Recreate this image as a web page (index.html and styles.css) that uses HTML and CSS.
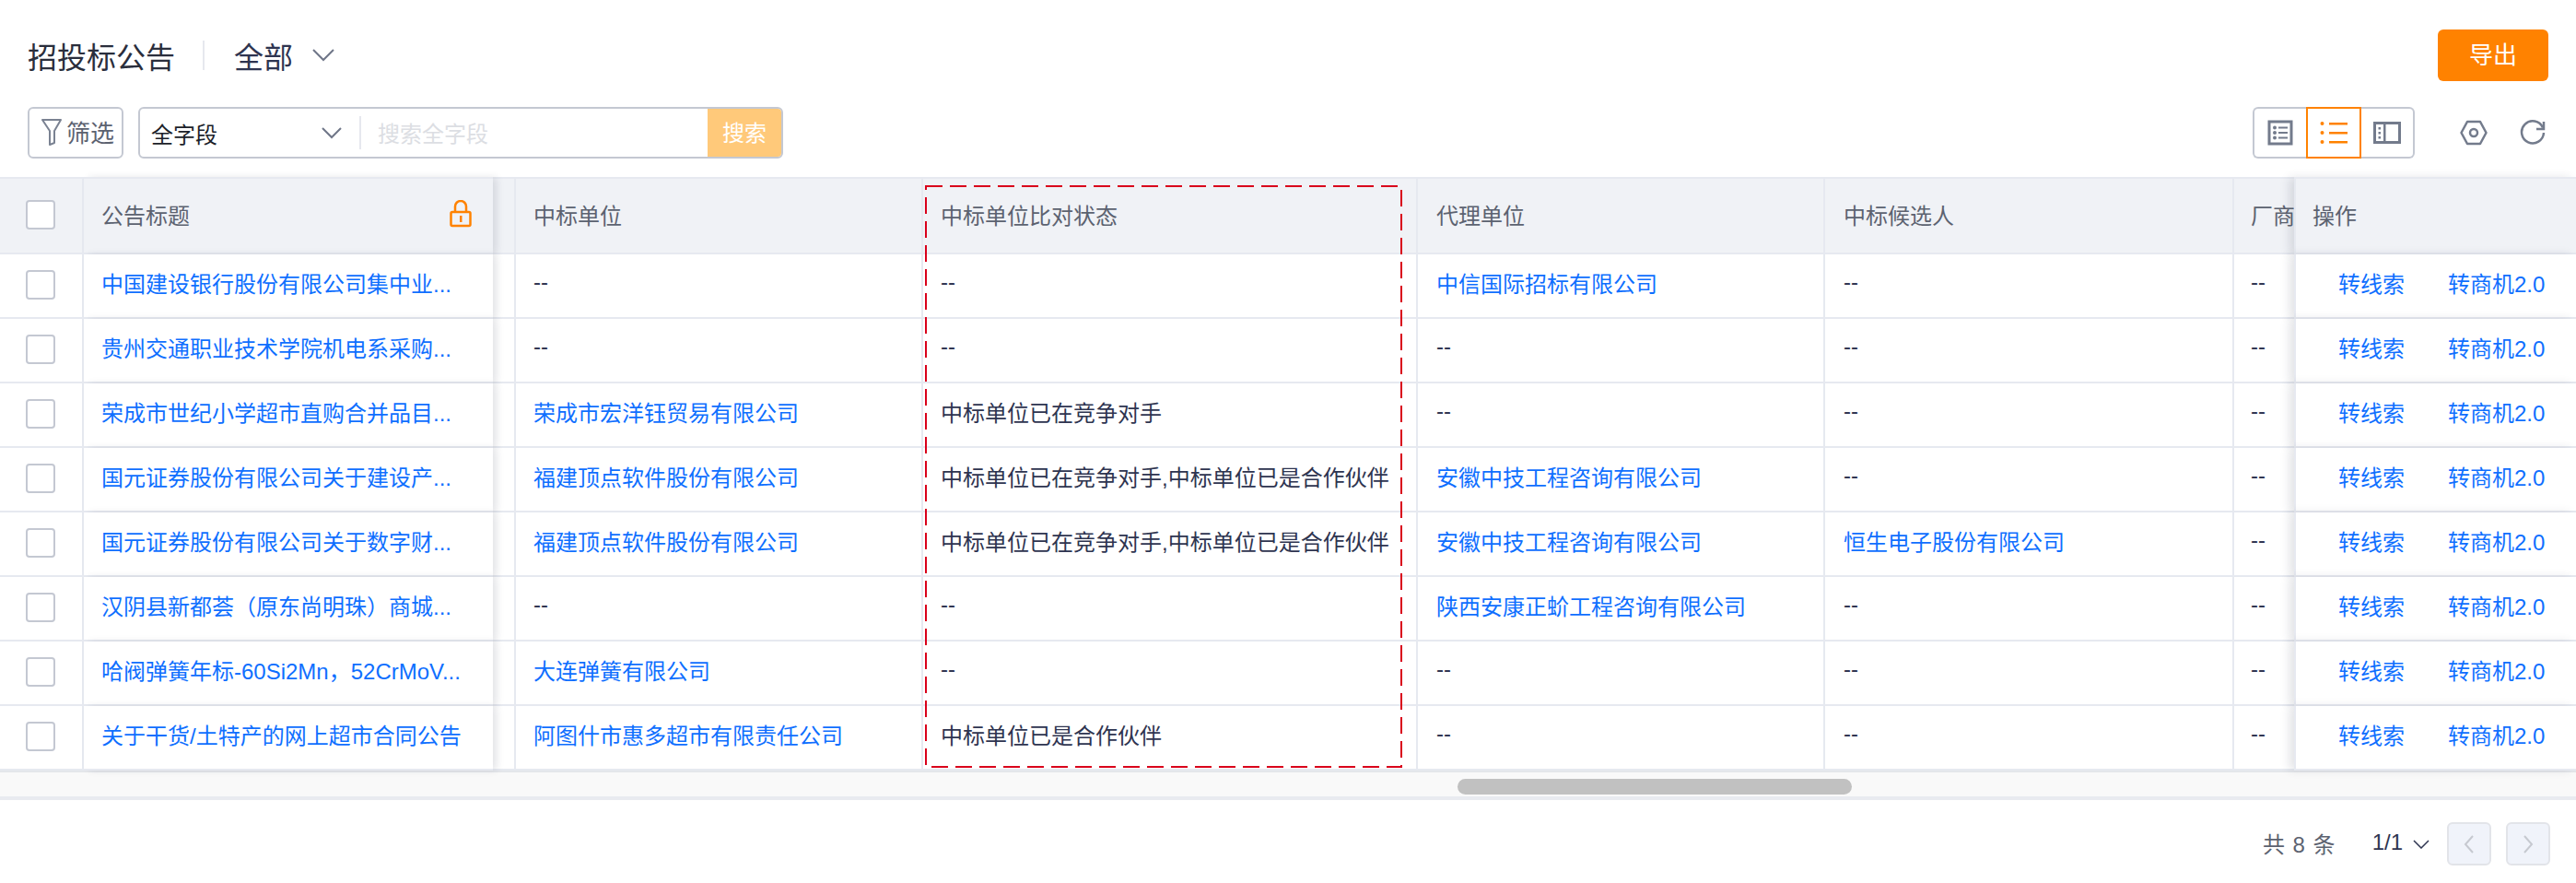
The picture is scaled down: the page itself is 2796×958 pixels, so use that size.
FILE: index.html
```html
<!DOCTYPE html>
<html>
<head>
  <title>招投标公告</title>
  <link rel="stylesheet" href="styles.css">
</head>
<body>
  <div id="page">
    <div class="title-row">
      <h1 class="page-title">招投标公告</h1>
      <span class="title-divider"></span>
      <span class="scope">全部</span>
      <svg class="scope-arrow" width="26" height="16" viewBox="0 0 26 16"><path d="M2 2l11 11L24 2" fill="none" stroke="#6f7688" stroke-width="2"/></svg>
      <button class="export-btn"><span>导出</span></button>
    </div>

    <div class="tool-row">
      <button class="filter-btn">
        <svg width="24" height="30" viewBox="0 0 24 30"><path d="M2 2h20l-7 12v13l-5 2V14z" fill="none" stroke="#7a8292" stroke-width="2" stroke-linejoin="round"/></svg>
        <span>筛选</span>
      </button>
      <div class="search-box">
        <div class="search-field">
          <span>全字段</span>
          <svg width="24" height="14" viewBox="0 0 24 14"><path d="M2 2l10 10L22 2" fill="none" stroke="#6f7688" stroke-width="2"/></svg>
        </div>
        <span class="search-input">搜索全字段</span>
        <button class="search-btn">搜索</button>
      </div>
      <div class="tool-right">
        <div class="view-switch">
          <button class="view-btn">
            <svg width="28" height="28" viewBox="0 0 28 28"><rect x="2" y="2" width="24" height="24" fill="none" stroke="#737b8c" stroke-width="3"/><g fill="#737b8c"><circle cx="8" cy="8.500" r="2"/><circle cx="8" cy="14" r="2"/><circle cx="8" cy="19.500" r="2"/><rect x="12" y="7.500" width="10" height="2"/><rect x="12" y="13" width="10" height="2"/><rect x="12" y="18.500" width="10" height="2"/></g></svg>
          </button>
          <button class="view-btn active">
            <svg width="32" height="26" viewBox="0 0 32 26"><g fill="#ff8200"><circle cx="3.500" cy="3" r="2"/><circle cx="3.500" cy="13" r="2"/><circle cx="3.500" cy="23" r="2"/><rect x="11" y="2" width="20" height="2.500"/><rect x="11" y="12" width="20" height="2.500"/><rect x="11" y="22" width="20" height="2.500"/></g></svg>
          </button>
          <button class="view-btn">
            <svg width="30" height="24" viewBox="0 0 30 24"><rect x="1.500" y="1.500" width="27" height="21" fill="none" stroke="#737b8c" stroke-width="3"/><rect x="11" y="2" width="2.500" height="20" fill="#737b8c"/><g fill="#737b8c"><rect x="5.500" y="6" width="2.500" height="2.500"/><rect x="5.500" y="11" width="2.500" height="2.500"/><rect x="5.500" y="16" width="2.500" height="2.500"/></g></svg>
          </button>
        </div>
        <svg class="tool-icon" width="30" height="28" viewBox="0 0 30 28"><path d="M8 2h14l6.500 12L22 26H8L1.500 14z" fill="none" stroke="#737b8c" stroke-width="2.500" stroke-linejoin="round"/><circle cx="15" cy="14" r="4" fill="none" stroke="#737b8c" stroke-width="2.500"/></svg>
        <svg class="tool-icon" width="28" height="28" viewBox="0 0 28 28"><path d="M25 8.500A12 12 0 1 0 26 14" fill="none" stroke="#737b8c" stroke-width="2.500"/><path d="M26 2v8h-8" fill="none" stroke="#737b8c" stroke-width="2.500"/></svg>
      </div>
    </div>

    <table class="data-table">
      <colgroup>
        <col class="col-check">
        <col class="col-title">
        <col class="col-stub">
        <col class="col-winner">
        <col class="col-status">
        <col class="col-agent">
        <col class="col-candidate">
        <col class="col-vendor">
        <col class="col-action">
      </colgroup>
      <thead>
        <tr>
          <th class="check-cell"><span class="checkbox"></span></th>
          <th class="title-cell">
            <div class="title-head">
              公告标题
              <svg width="24" height="30" viewBox="0 0 24 30"><path d="M6 13V7a6 6 0 0 1 12 0v6" fill="none" stroke="#ff8200" stroke-width="2.500"/><rect x="1.500" y="13" width="21" height="15" rx="1.500" fill="none" stroke="#ff8200" stroke-width="2.500"/><rect x="11" y="17" width="2.500" height="7" fill="#ff8200"/></svg>
            </div>
          </th>
          <th></th>
          <th class="narrow-cell">中标单位</th>
          <th class="narrow-cell">中标单位比对状态</th>
          <th>代理单位</th>
          <th>中标候选人</th>
          <th class="vendor-cell">厂商</th>
          <th class="action-cell">操作</th>
        </tr>
      </thead>
      <tbody>
        <tr>
          <td class="check-cell"><span class="checkbox"></span></td>
          <td class="title-cell"><a>中国建设银行股份有限公司集中业...</a></td>
          <td></td>
          <td class="narrow-cell">--</td>
          <td class="narrow-cell">--</td>
          <td><a>中信国际招标有限公司</a></td>
          <td>--</td>
          <td class="vendor-cell">--</td>
          <td class="action-cell"><div class="actions"><a>转线索</a><a>转商机2.0</a></div></td>
        </tr>
        <tr>
          <td class="check-cell"><span class="checkbox"></span></td>
          <td class="title-cell"><a>贵州交通职业技术学院机电系采购...</a></td>
          <td></td>
          <td class="narrow-cell">--</td>
          <td class="narrow-cell">--</td>
          <td>--</td>
          <td>--</td>
          <td class="vendor-cell">--</td>
          <td class="action-cell"><div class="actions"><a>转线索</a><a>转商机2.0</a></div></td>
        </tr>
        <tr>
          <td class="check-cell"><span class="checkbox"></span></td>
          <td class="title-cell"><a>荣成市世纪小学超市直购合并品目...</a></td>
          <td></td>
          <td class="narrow-cell"><a>荣成市宏洋钰贸易有限公司</a></td>
          <td class="narrow-cell">中标单位已在竞争对手</td>
          <td>--</td>
          <td>--</td>
          <td class="vendor-cell">--</td>
          <td class="action-cell"><div class="actions"><a>转线索</a><a>转商机2.0</a></div></td>
        </tr>
        <tr>
          <td class="check-cell"><span class="checkbox"></span></td>
          <td class="title-cell"><a>国元证券股份有限公司关于建设产...</a></td>
          <td></td>
          <td class="narrow-cell"><a>福建顶点软件股份有限公司</a></td>
          <td class="narrow-cell">中标单位已在竞争对手,中标单位已是合作伙伴</td>
          <td><a>安徽中技工程咨询有限公司</a></td>
          <td>--</td>
          <td class="vendor-cell">--</td>
          <td class="action-cell"><div class="actions"><a>转线索</a><a>转商机2.0</a></div></td>
        </tr>
        <tr>
          <td class="check-cell"><span class="checkbox"></span></td>
          <td class="title-cell"><a>国元证券股份有限公司关于数字财...</a></td>
          <td></td>
          <td class="narrow-cell"><a>福建顶点软件股份有限公司</a></td>
          <td class="narrow-cell">中标单位已在竞争对手,中标单位已是合作伙伴</td>
          <td><a>安徽中技工程咨询有限公司</a></td>
          <td><a>恒生电子股份有限公司</a></td>
          <td class="vendor-cell">--</td>
          <td class="action-cell"><div class="actions"><a>转线索</a><a>转商机2.0</a></div></td>
        </tr>
        <tr>
          <td class="check-cell"><span class="checkbox"></span></td>
          <td class="title-cell"><a>汉阴县新都荟（原东尚明珠）商城...</a></td>
          <td></td>
          <td class="narrow-cell">--</td>
          <td class="narrow-cell">--</td>
          <td><a>陕西安康正蚧工程咨询有限公司</a></td>
          <td>--</td>
          <td class="vendor-cell">--</td>
          <td class="action-cell"><div class="actions"><a>转线索</a><a>转商机2.0</a></div></td>
        </tr>
        <tr>
          <td class="check-cell"><span class="checkbox"></span></td>
          <td class="title-cell"><a>哈阀弹簧年标-60Si2Mn，52CrMoV...</a></td>
          <td></td>
          <td class="narrow-cell"><a>大连弹簧有限公司</a></td>
          <td class="narrow-cell">--</td>
          <td>--</td>
          <td>--</td>
          <td class="vendor-cell">--</td>
          <td class="action-cell"><div class="actions"><a>转线索</a><a>转商机2.0</a></div></td>
        </tr>
        <tr>
          <td class="check-cell"><span class="checkbox"></span></td>
          <td class="title-cell"><a>关于干货/土特产的网上超市合同公告</a></td>
          <td></td>
          <td class="narrow-cell"><a>阿图什市惠多超市有限责任公司</a></td>
          <td class="narrow-cell">中标单位已是合作伙伴</td>
          <td>--</td>
          <td>--</td>
          <td class="vendor-cell">--</td>
          <td class="action-cell"><div class="actions"><a>转线索</a><a>转商机2.0</a></div></td>
        </tr>
      </tbody>
    </table>

    <div class="scroll-track"><div class="scroll-thumb"></div></div>

    <div class="pager">
      <span class="pager-total">共 8 条</span>
      <span class="pager-page">1/1</span>
      <svg width="18" height="10" viewBox="0 0 18 10"><path d="M1 1l8 8 8-8" fill="none" stroke="#2e3450" stroke-width="1.500"/></svg>
      <button class="page-btn first">
        <svg width="12" height="20" viewBox="0 0 12 20"><path d="M10 1L2 10l8 9" fill="none" stroke="#c6c9d0" stroke-width="2"/></svg>
      </button>
      <button class="page-btn">
        <svg width="12" height="20" viewBox="0 0 12 20"><path d="M2 1l8 9-8 9" fill="none" stroke="#c6c9d0" stroke-width="2"/></svg>
      </button>
    </div>

    <!-- red marker round the status column -->
    <svg class="marker" width="520" height="634" viewBox="0 0 520 634"><rect x="1" y="1" width="516" height="630" fill="none" stroke="#d9001b" stroke-width="2" stroke-dasharray="18 8"/></svg>
  </div>
</body>
</html>
```

FILE: styles.css
```css
* {
  box-sizing: border-box;
}
body {
  margin: 0;
  background: #fff;
  font-family: "Liberation Sans", "Noto Sans CJK SC", sans-serif;
  font-size: 24px;
  color: #2e3450;
}
button {
  font-family: inherit;
  font-size: 24px;
  padding: 0;
  cursor: pointer;
}
#page {
  position: relative;
  width: 2796px;
  height: 958px;
  padding-top: 32px;
  overflow: hidden;
}

/* top rows */
.title-row {
  display: flex;
  align-items: center;
  height: 56px;
  padding: 0 30px;
}
.page-title {
  margin: 0;
  font-size: 32px;
  font-weight: normal;
  color: #2a2e3c;
}
.title-divider {
  width: 2px;
  height: 32px;
  margin: 0 32px 0 30px;
  background: #e6e8ee;
}
.scope {
  font-size: 32px;
  color: #2e3450;
}
.scope-arrow {
  margin-left: 20px;
}
.export-btn {
  width: 120px;
  height: 56px;
  margin-left: auto;
  padding-bottom: 5px;
  border: none;
  border-radius: 6px;
  background: #ff8200;
  color: #fff;
  font-size: 26px;
}
.tool-row {
  display: flex;
  align-items: center;
  height: 56px;
  margin-top: 28px;
  padding: 0 33px 0 30px;
}
.filter-btn {
  display: flex;
  align-items: center;
  gap: 4px;
  width: 104px;
  height: 56px;
  padding: 0 0 3px 12px;
  border: 2px solid #c4c8d2;
  border-radius: 6px;
  background: #fff;
  color: #5c6270;
  font-size: 26px;
  white-space: nowrap;
}
.search-box {
  display: flex;
  align-items: center;
  width: 700px;
  height: 56px;
  margin-left: 16px;
  border: 2px solid #c4c8d2;
  border-radius: 6px;
  overflow: hidden;
}
.search-field {
  display: flex;
  align-items: center;
  justify-content: space-between;
  width: 240px;
  height: 36px;
  padding: 0 18px 0 12px;
  border-right: 2px solid #e6e8ee;
  color: #1c1f2a;
}
.search-input {
  flex: 1;
  padding: 0 0 2px 18px;
  color: #dcdee3;
}
.search-btn {
  width: 80px;
  height: 52px;
  padding-bottom: 3px;
  border: none;
  background: #ffc97a;
  color: #fff;
}
.tool-right {
  display: flex;
  align-items: center;
  margin-left: auto;
}
.view-switch {
  display: flex;
  margin-right: 49px;
}
.view-btn {
  display: flex;
  align-items: center;
  justify-content: center;
  width: 58px;
  height: 56px;
  border: 2px solid #c4c8d2;
  background: #fff;
}
.view-btn:first-child {
  border-right: none;
  border-radius: 6px 0 0 6px;
}
.view-btn:last-child {
  border-left: none;
  border-radius: 0 6px 6px 0;
}
.view-btn.active {
  width: 60px;
  border-color: #ff8200;
}
.tool-icon {
  margin-right: 35px;
}
.tool-icon:last-child {
  margin-right: 0;
}

/* table */
.data-table {
  width: 2796px;
  margin-top: 20px;
  border-collapse: separate;
  border-spacing: 0;
  table-layout: fixed;
}
.col-check { width: 91px; }
.col-title { width: 444px; }
.col-stub { width: 25px; }
.col-winner { width: 442px; }
.col-status { width: 537px; }
.col-agent { width: 442px; }
.col-candidate { width: 444px; }
.col-vendor { width: 65px; }
.col-action { width: 306px; }
.data-table th,
.data-table td {
  height: 70px;
  padding: 0 0 8px 20px;
  border-right: 2px solid #e6e9f0;
  border-bottom: 2px solid #e6e9f0;
  font-weight: normal;
  text-align: left;
  white-space: nowrap;
  overflow: hidden;
}
.data-table th {
  height: 84px;
  padding-bottom: 4px;
  border-top: 2px solid #e6e9f0;
  background: #f0f2f6;
  color: #5c6270;
}
.data-table td {
  background: #fff;
}
.data-table a {
  color: #0f6fff;
}
.data-table th.narrow-cell,
.data-table td.narrow-cell {
  padding-left: 19px;
}
.data-table th.vendor-cell,
.data-table td.vendor-cell {
  padding-left: 18px;
  border-right: none;
}
.data-table th.check-cell,
.data-table td.check-cell {
  padding: 0 0 2px 28px;
}
.checkbox {
  display: block;
  width: 32px;
  height: 32px;
  border: 2px solid #c4c8d2;
  border-radius: 4px;
  background: #fff;
}
.data-table th.title-cell,
.data-table td.title-cell {
  padding-left: 19px;
  border-right: none;
  position: relative;
  z-index: 1;
  overflow: visible;
  box-shadow: 5px 0 8px -1px rgba(30, 40, 60, 0.13);
}
.title-head {
  display: flex;
  align-items: center;
  justify-content: space-between;
  padding-right: 23px;
}
.data-table th.action-cell,
.data-table td.action-cell {
  padding-left: 18px;
  border-right: none;
  border-left: 2px solid #e6e9f0;
  position: relative;
  z-index: 1;
  overflow: visible;
  box-shadow: -6px 0 10px -1px rgba(30, 40, 60, 0.13);
}
.actions {
  display: flex;
  gap: 47px;
  padding-left: 28px;
}

/* scrollbar and pager */
.scroll-track {
  height: 32px;
  padding: 7px 0 0 1582px;
  background: #f9f9f9;
  border-top: 2px solid #e4e6ea;
  border-bottom: 4px solid #e9ebf0;
}
.scroll-thumb {
  width: 428px;
  height: 17px;
  border-radius: 9px;
  background: #c1c1c1;
}
.pager {
  display: flex;
  align-items: center;
  justify-content: flex-end;
  margin-top: 24px;
  padding-right: 28px;
}
.pager-total {
  padding-bottom: 3px;
  color: #5c6270;
  word-spacing: 2px;
}
.pager-page {
  margin: 0 11px 0 40px;
  padding-bottom: 3px;
}
.page-btn {
  display: flex;
  align-items: center;
  justify-content: center;
  width: 48px;
  height: 47px;
  margin-left: 16px;
  border: 2px solid #e2e4e9;
  border-radius: 6px;
  background: #f0f3fa;
}
.page-btn.first {
  margin-left: 19px;
}

/* overlay */
.marker {
  position: absolute;
  left: 1004px;
  top: 201px;
}
```
